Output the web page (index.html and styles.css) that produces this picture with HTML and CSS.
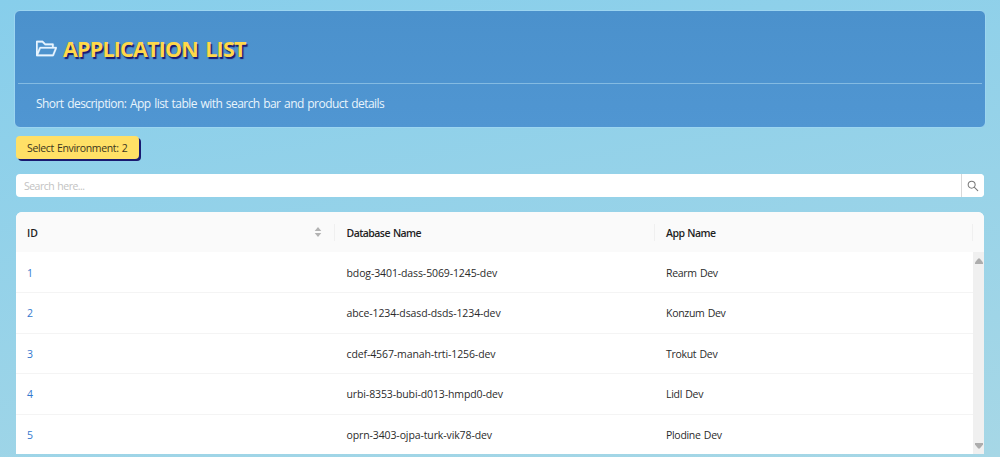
FILE: index.html
```html
<!DOCTYPE html>
<html lang="en">
<head>
<meta charset="utf-8">
<title>Application List</title>
<link rel="stylesheet" href="styles.css">
</head>
<body>
<main class="page">
  <header class="banner">
    <div class="banner-head">
      <svg class="folder" viewBox="64 64 896 896"><path d="M928 444H820V330.4c0-17.7-14.3-32-32-32H473L355.7 186.2a8.15 8.15 0 00-5.5-2.2H96c-17.7 0-32 14.3-32 32v592c0 17.7 14.3 32 32 32h698c13 0 24.8-7.9 29.7-20l134-332c1.5-3.8 2.3-7.9 2.3-12 0-17.7-14.3-32-32-32zM136 256h188.5l119.6 114.4H748V444H238c-13 0-24.8 7.9-29.7 20L136 643.2V256zm635.3 512H159l103.3-256h612.4L771.3 768z"/></svg>
      <h1 class="title">APPLICATION LIST</h1>
    </div>
    <p class="description">Short description: App list table with search bar and product details</p>
  </header>
  <button class="environment"><span>Select Environment: 2</span></button>
  <div class="search">
    <span class="search-field">Search here...</span>
    <button class="search-button" aria-label="Search"><svg class="lens" viewBox="64 64 896 896"><path d="M909.6 854.5L649.9 594.8C690.2 542.7 712 479 712 412c0-80.2-31.3-155.4-87.9-212.1-56.6-56.7-132-87.9-212.1-87.9s-155.5 31.3-212.1 87.9C143.2 256.5 112 331.8 112 412c0 80.1 31.3 155.5 87.9 212.1C256.5 680.8 331.8 712 412 712c67 0 130.6-21.8 182.7-62l259.7 259.6a8.2 8.2 0 0011.6 0l43.6-43.5a8.2 8.2 0 000-11.6zM570.4 570.4C528 612.7 471.8 636 412 636s-116-23.3-158.4-65.6C211.3 528 188 471.8 188 412s23.3-116.1 65.6-158.4C296 211.2 352.2 188 412 188s116.1 23.2 158.4 65.6S636 352.2 636 412s-23.3 116.1-65.6 158.4z"/></svg></button>
  </div>
  <section class="table">
    <div class="head">
      <div class="th"><span>ID</span><svg class="sorter" viewBox="0 0 8 10"><path d="M4 0L7.3 4H.7zM4 10L.7 6h6.6z"/></svg></div>
      <div class="th"><span>Database Name</span></div>
      <div class="th"><span>App Name</span></div>
    </div>
    <div class="body">
      <div class="rows">
        <div class="row"><a class="id">1</a><span>bdog-3401-dass-5069-1245-dev</span><span class="app">Rearm Dev</span></div>
        <div class="row"><a class="id">2</a><span>abce-1234-dsasd-dsds-1234-dev</span><span class="app">Konzum Dev</span></div>
        <div class="row"><a class="id">3</a><span>cdef-4567-manah-trti-1256-dev</span><span class="app">Trokut Dev</span></div>
        <div class="row"><a class="id">4</a><span>urbi-8353-bubi-d013-hmpd0-dev</span><span class="app">Lidl Dev</span></div>
        <div class="row"><a class="id">5</a><span>oprn-3403-ojpa-turk-vik78-dev</span><span class="app">Plodine Dev</span></div>
      </div>
      <div class="scrollbar">
        <svg class="arrow" viewBox="0 0 8 6"><path d="M3.2.5h1.6L8 4.5V6H0V4.5z"/></svg>
        <svg class="arrow" viewBox="0 0 8 6"><path d="M0 0h8v1.5L4.8 5.5H3.2L0 1.5z"/></svg>
      </div>
    </div>
  </section>
</main>
</body>
</html>
```
FILE: styles.css
```css
* { box-sizing: border-box; }
body {
  margin: 0;
  height: 457px;
  overflow: hidden;
  background: linear-gradient(170deg, #87ceeb, #a6d7e6);
  font-family: "Open Sans", "Noto Sans", sans-serif;
  font-size: 10.5px;
  color: #2b2b2b;
}
button { font: inherit; border: 0; margin: 0; }
.page { display: flex; flex-direction: column; padding: 10px 16px 0; }
.banner {
  height: 118px;
  margin: 0 -2px;
  padding: 0 3px;
  border: 1px solid #9cd5f0;
  border-radius: 6px;
  background: linear-gradient(#4b91cc, #5096d2);
}
.banner-head {
  display: flex;
  align-items: center;
  height: 73px;
  padding: 3px 0 0 18px;
  border-bottom: 1px solid #84bbe2;
}
.folder { width: 21px; height: 21px; fill: #e8f5ff; stroke: #e8f5ff; stroke-width: 12; margin-right: 6px; }
.title {
  margin: 0;
  font-size: 21.5px;
  line-height: 28px;
  font-weight: 700;
  letter-spacing: -0.8px;
  word-spacing: 2.5px;
  white-space: nowrap;
  color: #ffd84a;
  text-shadow: 1.5px 1.5px 1px #191970;
}
.description {
  margin: 0;
  padding-left: 18px;
  font-size: 12px;
  line-height: 40px;
  letter-spacing: -0.55px;
  word-spacing: 1px;
  color: #e9f4fc;
}
.environment {
  width: 123px;
  height: 23px;
  margin-top: 8px;
  padding: 0 0 0 11px;
  text-align: left;
  white-space: nowrap;
  border-radius: 4px;
  background: #ffe066;
  box-shadow: 2px 2px 0 #191970;
  letter-spacing: -0.35px;
  word-spacing: 0.8px;
  color: #3b3520;
}
.search {
  display: flex;
  height: 23px;
  margin-top: 15px;
  border-radius: 4px;
  background: #fff;
}
.search-field { flex: 1; padding-left: 8px; line-height: 24px; letter-spacing: -0.52px; word-spacing: 1px; color: #c2c2c2; }
.search-button {
  display: grid;
  place-items: center;
  width: 23px;
  padding: 0;
  border-left: 1px solid #d9d9d9;
  border-radius: 0 4px 4px 0;
  background: #fff;
}
.lens { width: 12px; height: 12px; fill: #777; }
.table { height: 242px; margin-top: 15px; border-radius: 6px 6px 0 0; background: #fff; overflow: hidden; }
.head {
  display: grid;
  grid-template-columns: 319px 319.5px 318.5px;
  align-items: center;
  height: 40px;
  background: #fafafa;
  font-weight: 600;
  letter-spacing: -0.55px;
  word-spacing: 0.8px;
  color: #1f1f1f;
}
.th {
  display: flex;
  align-items: center;
  justify-content: space-between;
  height: 17px;
  padding: 1px 12px 0 11.5px;
  border-right: 1px solid #f0f0f0;
}
.th:first-child { letter-spacing: 0; padding-left: 11px; }
.sorter { width: 8px; height: 10px; margin-top: -1px; fill: #b3b3b3; }
.body { display: flex; height: 202px; }
.rows { flex: 1; padding-top: 0.5px; }
.row {
  display: grid;
  grid-template-columns: 319.5px 319.5px 1fr;
  align-items: center;
  height: 40.5px;
  border-bottom: 1px solid #f4f4f4;
  letter-spacing: -0.11px;
}
.row > * { padding: 1px 0 0 11px; }
.row:last-child { border-bottom: 0; }
.row .app { letter-spacing: -0.3px; word-spacing: 0.8px; }
.id { color: #3478ce; }
.scrollbar {
  display: flex;
  flex-direction: column;
  align-items: center;
  justify-content: space-between;
  width: 11px;
  padding: 6px 0 5px;
  background: #f0f0f0;
}
.arrow { width: 8px; height: 6px; fill: #adadad; }
```
